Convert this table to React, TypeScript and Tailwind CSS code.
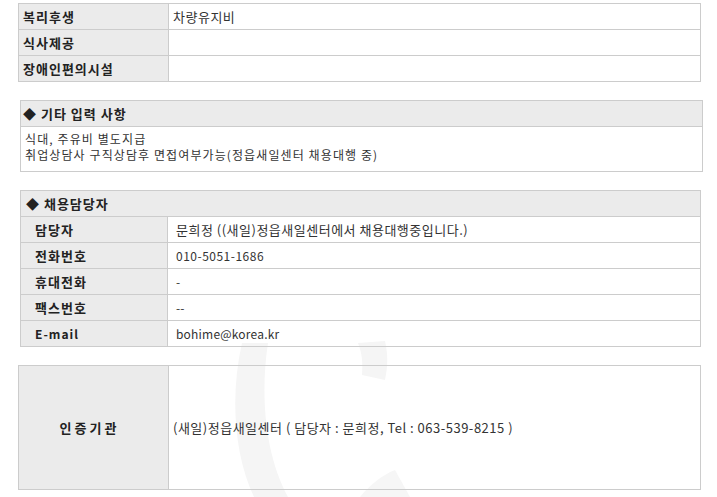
import React from 'react';

const font = { fontFamily: '"Noto Sans CJK KR", "Noto Sans", sans-serif' };

const Row = ({
  label,
  value,
  labelClass = 'pl-[4px]',
  valueClass = 'pl-[4px] text-[13px] tracking-[0.5px]',
}: {
  label: string;
  value?: string;
  labelClass?: string;
  valueClass?: string;
}) => (
  <tr className="h-[26px]">
    <th className={`w-[150px] bg-[#ebebeb] border border-[#cccccc] text-left font-bold text-[13px] tracking-[1px] text-[#222] ${labelClass}`}>{label}</th>
    <td className={`border border-[#cccccc] text-[#333] ${valueClass}`}>{value}</td>
  </tr>
);

export default function App() {
  return (
    <div className="relative w-[717px] h-[497px] bg-white overflow-hidden" style={font}>
      {/* faint watermark behind the last table */}
      <svg className="absolute left-[220px] top-[335px]" width="200" height="162" viewBox="0 0 200 162">
        <path d="M22 8 L48 8 C40 60 45 120 68 162 L34 162 C14 120 10 60 22 8 Z" fill="#f5f5f5" />
        <path d="M138 8 L165 6 C168 20 168 30 165 45 L142 40 C143 28 142 18 138 8 Z" fill="#f5f5f5" />
        <path d="M140 162 C150 150 162 140 175 135 L190 162 Z" fill="#f6f6f6" />
      </svg>

      <div className="relative flex flex-col pt-[3px]">
        <table className="ml-[18px] w-[683px] border-collapse">
          <tbody>
            <Row label="복리후생" value="차량유지비" />
            <Row label="식사제공" />
            <Row label="장애인편의시설" />
          </tbody>
        </table>

        <table className="ml-[20px] mt-[18px] w-[683px] border-collapse">
          <tbody>
            <tr className="h-[26px]">
              <th className="bg-[#ebebeb] border border-[#cccccc] text-left font-bold text-[13px] tracking-[1px] text-[#222] pl-[2px]">◆ 기타 입력 사항</th>
            </tr>
            <tr className="h-[45px]">
              <td className="border border-[#cccccc] text-[12px] tracking-[1.1px] text-[#333] pl-[4px] pb-[4px] leading-[16px]">
                <div>식대, 주유비 별도지급</div>
                <div>취업상담사 구직상담후 면접여부가능(정읍새일센터 채용대행 중)</div>
              </td>
            </tr>
          </tbody>
        </table>

        <table className="ml-[20px] mt-[18px] w-[681px] border-collapse">
          <tbody>
            <tr className="h-[26px]">
              <th colSpan={2} className="bg-[#ebebeb] border border-[#cccccc] text-left font-bold text-[13px] tracking-[1px] text-[#222] pl-[5px]">◆ 채용담당자</th>
            </tr>
            <Row label="담당자" value="문희정 ((새일)정읍새일센터에서 채용대행중입니다.)" labelClass="pl-[14px] !w-[147px]" valueClass="pl-[8px] text-[13px] tracking-[0.5px]" />
            <Row label="전화번호" value="010-5051-1686" labelClass="pl-[14px] !w-[147px]" valueClass="pl-[8px] text-[12px] tracking-[0.5px]" />
            <Row label="휴대전화" value="-" labelClass="pl-[14px] !w-[147px]" valueClass="pl-[8px] text-[12px]" />
            <Row label="팩스번호" value="--" labelClass="pl-[14px] !w-[147px]" valueClass="pl-[8px] text-[12px]" />
            <Row label="E-mail" value="bohime@korea.kr" labelClass="pl-[14px] !w-[147px] !text-[12px]" valueClass="pl-[8px] text-[12px] tracking-[0.2px]" />
          </tbody>
        </table>

        <table className="ml-[18px] mt-[18px] w-[683px] border-collapse">
          <tbody>
            <tr className="h-[124px]">
              <th className="w-[150px] bg-[#ebebeb] border border-[#cccccc] text-center font-bold text-[13px] tracking-[3px] text-[#222] pr-[8px]">인증기관</th>
              <td className="border border-[#cccccc] text-[13px] tracking-[0.5px] text-[#333] pl-[4px]">(새일)정읍새일센터 ( 담당자 : 문희정, Tel : 063-539-8215 )</td>
            </tr>
          </tbody>
        </table>
      </div>
    </div>
  );
}
